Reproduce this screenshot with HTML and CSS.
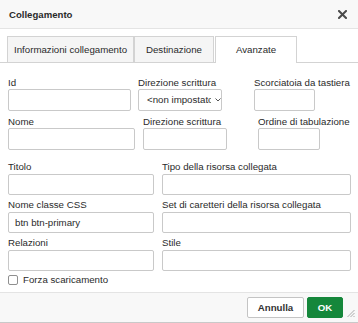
FILE: index.html
```html
<!DOCTYPE html>
<html lang="it">
<head>
<meta charset="utf-8">
<title>Collegamento</title>
<link rel="stylesheet" href="styles.css">
</head>
<body>
<div class="dialog">
  <div class="header">
    <span class="title">Collegamento</span>
    <svg class="close" width="9" height="9" viewBox="0 0 9 9"><path d="M1 1L8 8M8 1L1 8" stroke="#4a4a4a" stroke-width="2" stroke-linecap="square"/></svg>
  </div>
  <div class="tabs">
    <div class="tab tab-info">Informazioni collegamento</div>
    <div class="tab tab-dest">Destinazione</div>
    <div class="tab tab-active">Avanzate</div>
  </div>
  <div class="form">
    <div class="row row-a">
      <div class="field f-id"><div class="label">Id</div><div class="input"></div></div>
      <div class="field f-dir1"><div class="label">Direzione scrittura</div>
        <div class="input select"><span class="select-text">&lt;non impostato&gt;</span>
          <svg class="chev" width="6" height="4" viewBox="0 0 6 4"><path d="M0.5 0.5L3 3L5.5 0.5" fill="none" stroke="#555" stroke-width="1"/></svg>
        </div>
      </div>
      <div class="field f-key"><div class="label">Scorciatoia da tastiera</div><div class="input"></div></div>
    </div>
    <div class="row row-b">
      <div class="field f-name"><div class="label">Nome</div><div class="input"></div></div>
      <div class="field f-dir2"><div class="label">Direzione scrittura</div><div class="input"></div></div>
      <div class="field f-tab"><div class="label">Ordine di tabulazione</div><div class="input"></div></div>
    </div>
    <div class="grid">
      <div class="gfield"><div class="label">Titolo</div><div class="input"></div></div>
      <div class="gfield"><div class="label">Tipo della risorsa collegata</div><div class="input"></div></div>
      <div class="gfield"><div class="label">Nome classe CSS</div><div class="input">btn btn-primary</div></div>
      <div class="gfield"><div class="label">Set di caretteri della risorsa collegata</div><div class="input"></div></div>
      <div class="gfield"><div class="label">Relazioni</div><div class="input"></div></div>
      <div class="gfield"><div class="label">Stile</div><div class="input"></div></div>
    </div>
    <div class="check-row"><span class="checkbox"></span><span>Forza scaricamento</span></div>
  </div>
  <div class="footer">
    <div class="btn btn-cancel">Annulla</div>
    <div class="btn btn-ok">OK</div>
    <svg class="grip" width="8" height="21" viewBox="0 0 8 21"><path d="M7.5 13L0.5 20M7.5 16L3.5 20M7.5 19L6.5 20" stroke="#aaa" stroke-width="1"/></svg>
  </div>
</div>
</body>
</html>
```
FILE: styles.css
```css
* { box-sizing: border-box; }
html, body { margin: 0; padding: 0; background: #fff; }
body {
  font-family: "Liberation Sans", Arial, sans-serif;
  font-size: 9.7px;
  color: #2a2a2a;
}
.dialog {
  width: 358px;
  height: 323px;
  display: flex;
  flex-direction: column;
  background: #fff;
}
.header {
  height: 29px;
  background: #f8f8f8;
  border-bottom: 1px solid #e4e4e4;
  display: flex;
  align-items: center;
  justify-content: space-between;
  padding: 0 11px 0 9px;
}
.title { font-weight: bold; font-size: 9.6px; }
.close { display: block; }
.tabs {
  display: flex;
  align-items: flex-end;
  padding: 7px 0 0 7px;
  height: 34px;
  border-bottom: 1px solid #d3d3d3;
}
.tab {
  height: 26px;
  line-height: 25px;
  padding: 0 6px;
  border: 1px solid #d3d3d3;
  border-bottom: 0;
  background: #f5f5f5;
  text-align: center;
  white-space: nowrap;
}
.tab-info { width: 127px; }
.tab-dest { width: 80px; margin-left: 0; }
.tab-active {
  width: 82px;
  background: #fff;
  height: 27px;
  margin-bottom: -1px;
  margin-left: 1px;
}
.form { padding: 14px 0 0 8px; }
.row { display: flex; }
.row-b { margin-top: 4.5px; }
.field { flex: none; }
.label {
  line-height: 12px;
  height: 12px;
  white-space: nowrap;
}
.input {
  height: 22px;
  border: 1px solid #c9c9c9;
  border-radius: 2px;
  background: #fff;
  line-height: 20px;
  padding: 0 6px;
  white-space: nowrap;
}
.f-id { width: 123px; }
.f-dir1 { width: 84px; margin-left: 7px; }
.f-key { width: 61px; margin-left: 32px; }
.f-name { width: 127px; }
.f-dir2 { width: 84px; margin-left: 8px; }
.f-tab { width: 62px; margin-left: 31px; }
.select {
  display: flex;
  align-items: center;
  padding: 0 2px 0 8px;
}
.select-text {
  width: 64px;
  overflow: hidden;
  white-space: nowrap;
  flex: none;
}
.chev { margin-left: 4px; flex: none; }
.grid {
  display: grid;
  grid-template-columns: 146px 189px;
  column-gap: 8px;
  row-gap: 4px;
  margin-top: 11px;
}
.gfield .label { margin-bottom: 1px; }
.gfield .input { height: 21px; line-height: 19px; }
.check-row {
  display: flex;
  align-items: center;
  gap: 5px;
  margin-top: 3px;
  height: 12px;
}
.checkbox {
  width: 10px;
  height: 10px;
  border: 1px solid #8f8f8f;
  border-radius: 2px;
  background: #fff;
}
.footer {
  margin-top: auto;
  height: 31px;
  background: #f8f8f8;
  border-top: 1px solid #e4e4e4;
  border-bottom: 1px solid #c9c9c9;
  display: flex;
  justify-content: flex-end;
  align-items: flex-start;
  padding: 4px 3px 0 0;
}
.btn {
  height: 21px;
  line-height: 19px;
  border-radius: 2px;
  font-weight: bold;
  text-align: center;
  font-size: 9.7px;
}
.btn-cancel {
  width: 57px;
  background: #fff;
  border: 1px solid #c4c4c4;
  color: #333;
}
.btn-ok {
  width: 36px;
  margin-left: 3px;
  background: #15873b;
  border: 1px solid #15873b;
  color: #fff;
}
.grip { margin-left: 4px; display: block; }
```
